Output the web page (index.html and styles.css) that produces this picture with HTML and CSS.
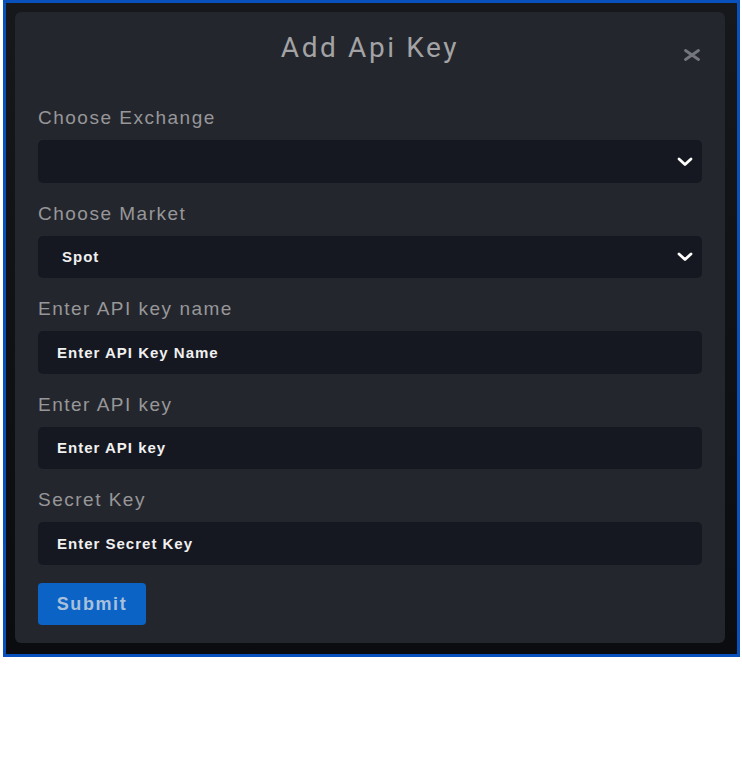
FILE: index.html
```html
<!DOCTYPE html>
<html lang="en">
<head>
    <meta charset="UTF-8">
    <meta name="viewport" content="width=device-width, initial-scale=1.0">
    <title>Add Api Key</title>
    <link rel="stylesheet" href="styles.css">
</head>
<body>

<div class="frame">
    <div class="modal">
        <div class="modal-header">
            <span></span>
            <h2 class="modal-title">Add Api Key</h2>
            <button class="close" aria-label="Close">
                <svg width="18" height="12" viewBox="0 0 18 12">
                    <path d="M2.5 1.5 L15.5 10.5 M15.5 1.5 L2.5 10.5" stroke="#74767c" stroke-width="2.8" stroke-linecap="round" fill="none"/>
                </svg>
            </button>
        </div>

        <form class="modal-body">
            <div class="field">
                <label class="label">Choose Exchange</label>
                <div class="select">
                    <span class="select-text"></span>
                    <svg class="chevron" width="16" height="10" viewBox="0 0 16 10">
                        <path d="M2 2 L8 7.5 L14 2" stroke="#ffffff" stroke-width="2.8" stroke-linecap="round" stroke-linejoin="round" fill="none"/>
                    </svg>
                </div>
            </div>

            <div class="field">
                <label class="label">Choose Market</label>
                <div class="select">
                    <span class="select-text">Spot</span>
                    <svg class="chevron" width="16" height="10" viewBox="0 0 16 10">
                        <path d="M2 2 L8 7.5 L14 2" stroke="#ffffff" stroke-width="2.8" stroke-linecap="round" stroke-linejoin="round" fill="none"/>
                    </svg>
                </div>
            </div>

            <div class="field">
                <label class="label">Enter API key name</label>
                <div class="input">Enter API Key Name</div>
            </div>

            <div class="field">
                <label class="label">Enter API key</label>
                <div class="input">Enter API key</div>
            </div>

            <div class="field">
                <label class="label">Secret Key</label>
                <div class="input">Enter Secret Key</div>
            </div>

            <button type="button" class="submit">Submit</button>
        </form>
    </div>
</div>

</body>
</html>
```

FILE: styles.css
```css
* {
    box-sizing: border-box;
}
body {
    margin: 0;
    background-color: #ffffff;
    font-family: 'Liberation Sans', Arial, sans-serif;
}
.frame {
    margin-left: 3px;
    width: 737px;
    height: 657px;
    border: 3px solid #0851bd;
    background: linear-gradient(#17181c 0, #131418 180px, #0b0c10 100%);
    padding: 9px 12px 11px 9px;
}
.modal {
    width: 710px;
    height: 631px;
    background-color: #24262d;
    border-radius: 6px;
    padding: 20px 23px 18px 23px;
}
.modal-header {
    display: grid;
    grid-template-columns: 1fr auto 1fr;
    align-items: start;
    height: 32px;
}
.modal-title {
    margin: 0;
    font-family: Roboto, sans-serif;
    font-weight: 400;
    font-size: 28px;
    line-height: 32px;
    letter-spacing: 2.6px;
    color: #a3a3a5;
}
.close {
    justify-self: end;
    margin-top: 17px;
    margin-right: 1px;
    padding: 0;
    border: none;
    background: none;
    width: 18px;
    height: 12px;
    cursor: pointer;
}
.close svg {
    display: block;
}
.modal-body {
    margin: 43px 0 0 0;
    display: flex;
    flex-direction: column;
}
.field {
    margin-bottom: 20px;
}
.label {
    display: block;
    font-size: 19px;
    line-height: 22px;
    letter-spacing: 1.5px;
    color: #979799;
    margin-bottom: 11px;
}
.select,
.input {
    height: 42.5px;
    background-color: #151821;
    border-radius: 5px;
    display: flex;
    align-items: center;
    color: #f0f0f0;
    font-weight: 700;
    font-size: 15px;
    letter-spacing: 1px;
}
.select {
    justify-content: space-between;
    padding: 0 9px 0 24px;
}
.input {
    padding: 0 19px;
}
.chevron {
    display: block;
    margin-top: 1px;
}
.submit {
    align-self: flex-start;
    margin-top: -1.5px;
    width: 108px;
    height: 42px;
    border: none;
    border-radius: 4px;
    background-color: #0c63c6;
    color: #a9c0db;
    font-family: 'Liberation Sans', Arial, sans-serif;
    font-weight: 700;
    font-size: 18px;
    letter-spacing: 1.6px;
    cursor: pointer;
}
```
